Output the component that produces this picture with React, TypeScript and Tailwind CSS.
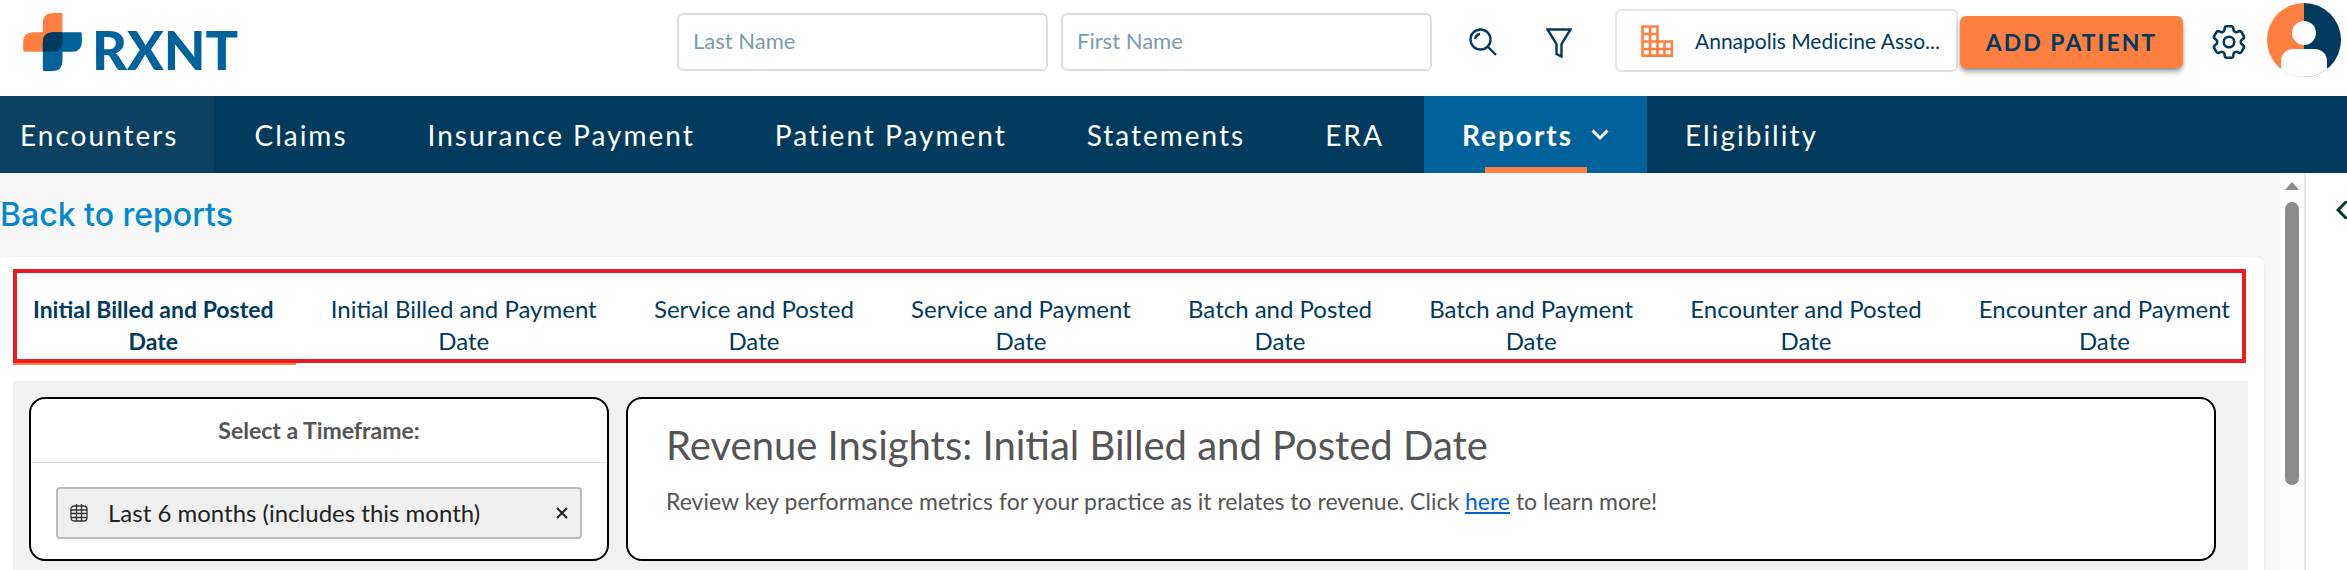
import {HiOutlineCog6Tooth} from "react-icons/hi2";

const navBefore = ["Claims", "Insurance Payment", "Patient Payment", "Statements", "ERA"];

const tabs = [
    "Initial Billed and Posted",
    "Initial Billed and Payment",
    "Service and Posted",
    "Service and Payment",
    "Batch and Posted",
    "Batch and Payment",
    "Encounter and Posted",
    "Encounter and Payment",
];

function Logo() {
    return (
        <a href="#" aria-label="RXNT" className="flex items-end gap-2.5">
            <svg viewBox="0 0 176 174" className="h-[58px] w-[59px]">
                <path fill="#ff7f41" d="M59 58V30Q59 0 89 0H114Q118 0 118 4V116H4Q0 116 0 112V88Q0 58 30 58Z"/>
                <path fill="#00629b" d="M89 58H172Q176 58 176 62V86Q176 116 146 116H118V144Q118 174 88 174H63Q59 174 59 170V88Q59 58 89 58Z"/>
                <path fill="#003a5d" d="M89 58H118V86Q118 116 88 116H59V88Q59 58 89 58Z"/>
            </svg>
            <span className="text-[54px] leading-[42px] font-black text-[#00629b]">RXNT</span>
        </a>
    )
}

function SearchIcon() {
    return (
        <svg viewBox="0 0 28 28" className="size-7" fill="none" stroke="#003a5d" strokeWidth="2.4">
            <circle cx="11.500" cy="11.500" r="10"/>
            <path d="M6 11Q7 6.500 11 6M18.500 18.500L27 27"/>
        </svg>
    )
}

function FilterIcon() {
    return (
        <svg viewBox="0 0 26 30" className="h-[30px] w-[26px]" fill="none" stroke="#003a5d" strokeWidth="2.4">
            <path d="M1.500 1.500H24.500L15.500 16V28.500L10.500 26V16Z"/>
        </svg>
    )
}

function BuildingIcon() {
    return (
        <svg viewBox="0 0 32 32" className="size-8 shrink-0" fill="none" stroke="#ff7f41" strokeWidth="2.6">
            <path d="M1.500 1.500H16.500V31H1.500ZM9 1.500V31M1.500 9H16.500M1.500 16.500H31V31H16.500M1.500 24H31M23.500 16.500V31M1.500 30.500H31"/>
        </svg>
    )
}

function Avatar() {
    return (
        <svg viewBox="0 0 74 74" className="size-[74px]">
            <clipPath id="avatar-clip">
                <circle cx="37" cy="37" r="37"/>
            </clipPath>
            <g clipPath="url(#avatar-clip)">
                <rect width="37" height="74" fill="#ff7f41"/>
                <rect x="37" width="37" height="74" fill="#003a5d"/>
                <circle cx="37" cy="30" r="12" fill="#fff"/>
                <rect x="14" y="46" width="46" height="40" rx="12" fill="#fff"/>
            </g>
        </svg>
    )
}

function CalendarIcon() {
    return (
        <svg viewBox="0 0 18 18" className="size-[18px]" fill="none" stroke="#333" strokeWidth="1.3">
            <rect x="1" y="2" width="16" height="15" rx="3"/>
            <path d="M6.500 0V17M11.500 0V17M1 6H17M1 9.500H17M1 13.500H17"/>
        </svg>
    )
}

function Header() {
    return (
        <header className="flex h-24 items-start justify-between pl-[23px] pr-1.5">
            <div className="pt-[13px]">
                <Logo/>
            </div>
            <div className="flex items-start">
                <form className="flex gap-[13px] pt-[13px]">
                    <input aria-label="Last Name" placeholder="Last Name" className="h-[58px] w-[371px] rounded-md border-2 border-[#dcdcdc] px-3.5 pb-1 text-[22px] placeholder:text-[#7a9bb0]"/>
                    <input aria-label="First Name" placeholder="First Name" className="h-[58px] w-[371px] rounded-md border-2 border-[#dcdcdc] px-3.5 pb-1 text-[22px] placeholder:text-[#7a9bb0]"/>
                </form>
                <button aria-label="Search" className="ml-[37px] pt-7"><SearchIcon/></button>
                <button aria-label="Filter" className="ml-[49px] pt-7"><FilterIcon/></button>
                <button className="mt-[9px] ml-[43px] flex h-[63px] w-[343px] items-center gap-[22px] rounded-md border-2 border-[#e4e4e4] pl-6 text-[21px] whitespace-nowrap text-[#003a5d]">
                    <BuildingIcon/>
                    Annapolis Medicine Asso...
                </button>
                <button className="mt-4 ml-0.5 h-[52px] w-[223px] rounded-md bg-[#ff7f41] text-[23px] font-bold tracking-[2px] whitespace-nowrap text-[#003a5d] shadow-md shadow-black/40">ADD PATIENT</button>
                <button aria-label="Settings" className="mt-[21px] ml-[25px] text-[42px] text-[#003a5d]"><HiOutlineCog6Tooth/></button>
                <button aria-label="Account" className="mt-[3px] ml-[17px]"><Avatar/></button>
            </div>
        </header>
    )
}

function Nav() {
    return (
        <nav className="flex h-[77px] bg-[#003a5d] text-[28px] tracking-[2px] whitespace-nowrap text-white">
            <a href="#" className="flex items-center bg-[#0b4261] pr-9 pl-5">Encounters</a>
            {navBefore.map((item) => (
                <a key={item} href="#" className="flex items-center px-10">{item}</a>
            ))}
            <a href="#" className="relative flex items-center gap-[18px] bg-[#00629b] px-[38px] font-bold">
                Reports
                <svg viewBox="0 0 18 12" className="h-3 w-[18px]" fill="none" stroke="#fff" strokeWidth="3">
                    <path d="M1.500 1.500L9 9L16.500 1.500"/>
                </svg>
                <span className="absolute bottom-0 left-[61px] h-1.5 w-[102px] bg-[#ff7f41]"/>
            </a>
            <a href="#" className="flex items-center px-[38px]">Eligibility</a>
        </nav>
    )
}

function ReportTabs() {
    return (
        <div className="relative mr-[18px] ml-[13px]">
            <div role="tablist" className="flex h-[94px] justify-between border-4 border-[#ed1c24] pt-5 pr-3 pl-4 text-[24px] leading-8 text-[#003a5d]">
                {tabs.map((tab, index) => (
                    <button key={tab} role="tab" aria-selected={index === 0} className="flex flex-col items-center whitespace-nowrap aria-selected:text-[23px] aria-selected:font-bold">
                        <span>{tab}</span>
                        <span>Date</span>
                    </button>
                ))}
            </div>
            <span className="absolute top-full left-0 h-0.5 w-[283px] bg-[#ff7f41]"/>
        </div>
    )
}

function TimeframeCard() {
    return (
        <section className="h-[164px] w-[580px] shrink-0 rounded-2xl border-2 border-black bg-white">
            <h2 className="flex h-16 items-center justify-center border-b border-[#ddd] text-[23px] font-bold text-[#555]">Select a Timeframe:</h2>
            <div className="mx-[25px] mt-6 flex h-[52px] items-center rounded border-2 border-[#bbb] bg-[#efefef] pr-3 pl-3 text-[#222]">
                <button className="flex grow items-center gap-5 text-[24px] whitespace-nowrap">
                    <CalendarIcon/>
                    Last 6 months (includes this month)
                </button>
                <button aria-label="Clear timeframe">
                    <svg viewBox="0 0 12 12" className="size-3" stroke="#222" strokeWidth="2">
                        <path d="M1 1L11 11M11 1L1 11"/>
                    </svg>
                </button>
            </div>
        </section>
    )
}

function Scrollbar() {
    return (
        <div className="flex w-[26px] shrink-0 flex-col items-center border-r-2 border-[#e6e6e6] bg-[#fcfcfc] pt-[9px]">
            <svg viewBox="0 0 14 8" className="h-2 w-3.5">
                <path fill="#8b8b8b" d="M7 0L14 8H0Z"/>
            </svg>
            <div className="mt-3 h-[283px] w-3.5 rounded-full bg-[#8b8b8b]"/>
        </div>
    )
}

function App() {
    return (
        <div className="flex min-h-screen flex-col overflow-hidden bg-white font-['Lato',sans-serif]">
            <Header/>
            <Nav/>
            <div className="flex grow">
                <main className="flex min-w-0 grow flex-col bg-[#f7f7f7] pr-4">
                    <div className="flex h-[84px] items-center">
                        <a href="#" className="font-['Inter',sans-serif] text-[32px] font-medium text-[#0089cf]">Back to reports</a>
                    </div>
                    <div className="flex grow flex-col rounded-tr-lg bg-white pt-3 shadow-sm">
                        <ReportTabs/>
                        <div className="mt-[18px] mr-4 ml-[13px] flex grow gap-[17px] bg-[#f1f1f1] pt-4 pr-8 pl-4">
                            <TimeframeCard/>
                            <section className="h-[164px] grow rounded-2xl border-2 border-black bg-white px-[38px] pt-[22px]">
                                <h1 className="text-[40px] leading-[48px] text-[#555]">Revenue Insights: Initial Billed and Posted Date</h1>
                                <p className="mt-4 text-[23px] leading-8 text-[#555]">
                                    Review key performance metrics for your practice as it relates to revenue. Click <a href="#" className="text-[#0062d6] underline">here</a> to learn more!
                                </p>
                            </section>
                        </div>
                    </div>
                </main>
                <Scrollbar/>
                <aside className="flex w-[41px] shrink-0 items-start justify-end pt-7">
                    <button aria-label="Expand panel">
                        <svg viewBox="0 0 11 18" className="h-[18px] w-[11px]" fill="none" stroke="#003a20" strokeWidth="3">
                            <path d="M11 0L2 9L11 18"/>
                        </svg>
                    </button>
                </aside>
            </div>
        </div>
    )
}

export default App
